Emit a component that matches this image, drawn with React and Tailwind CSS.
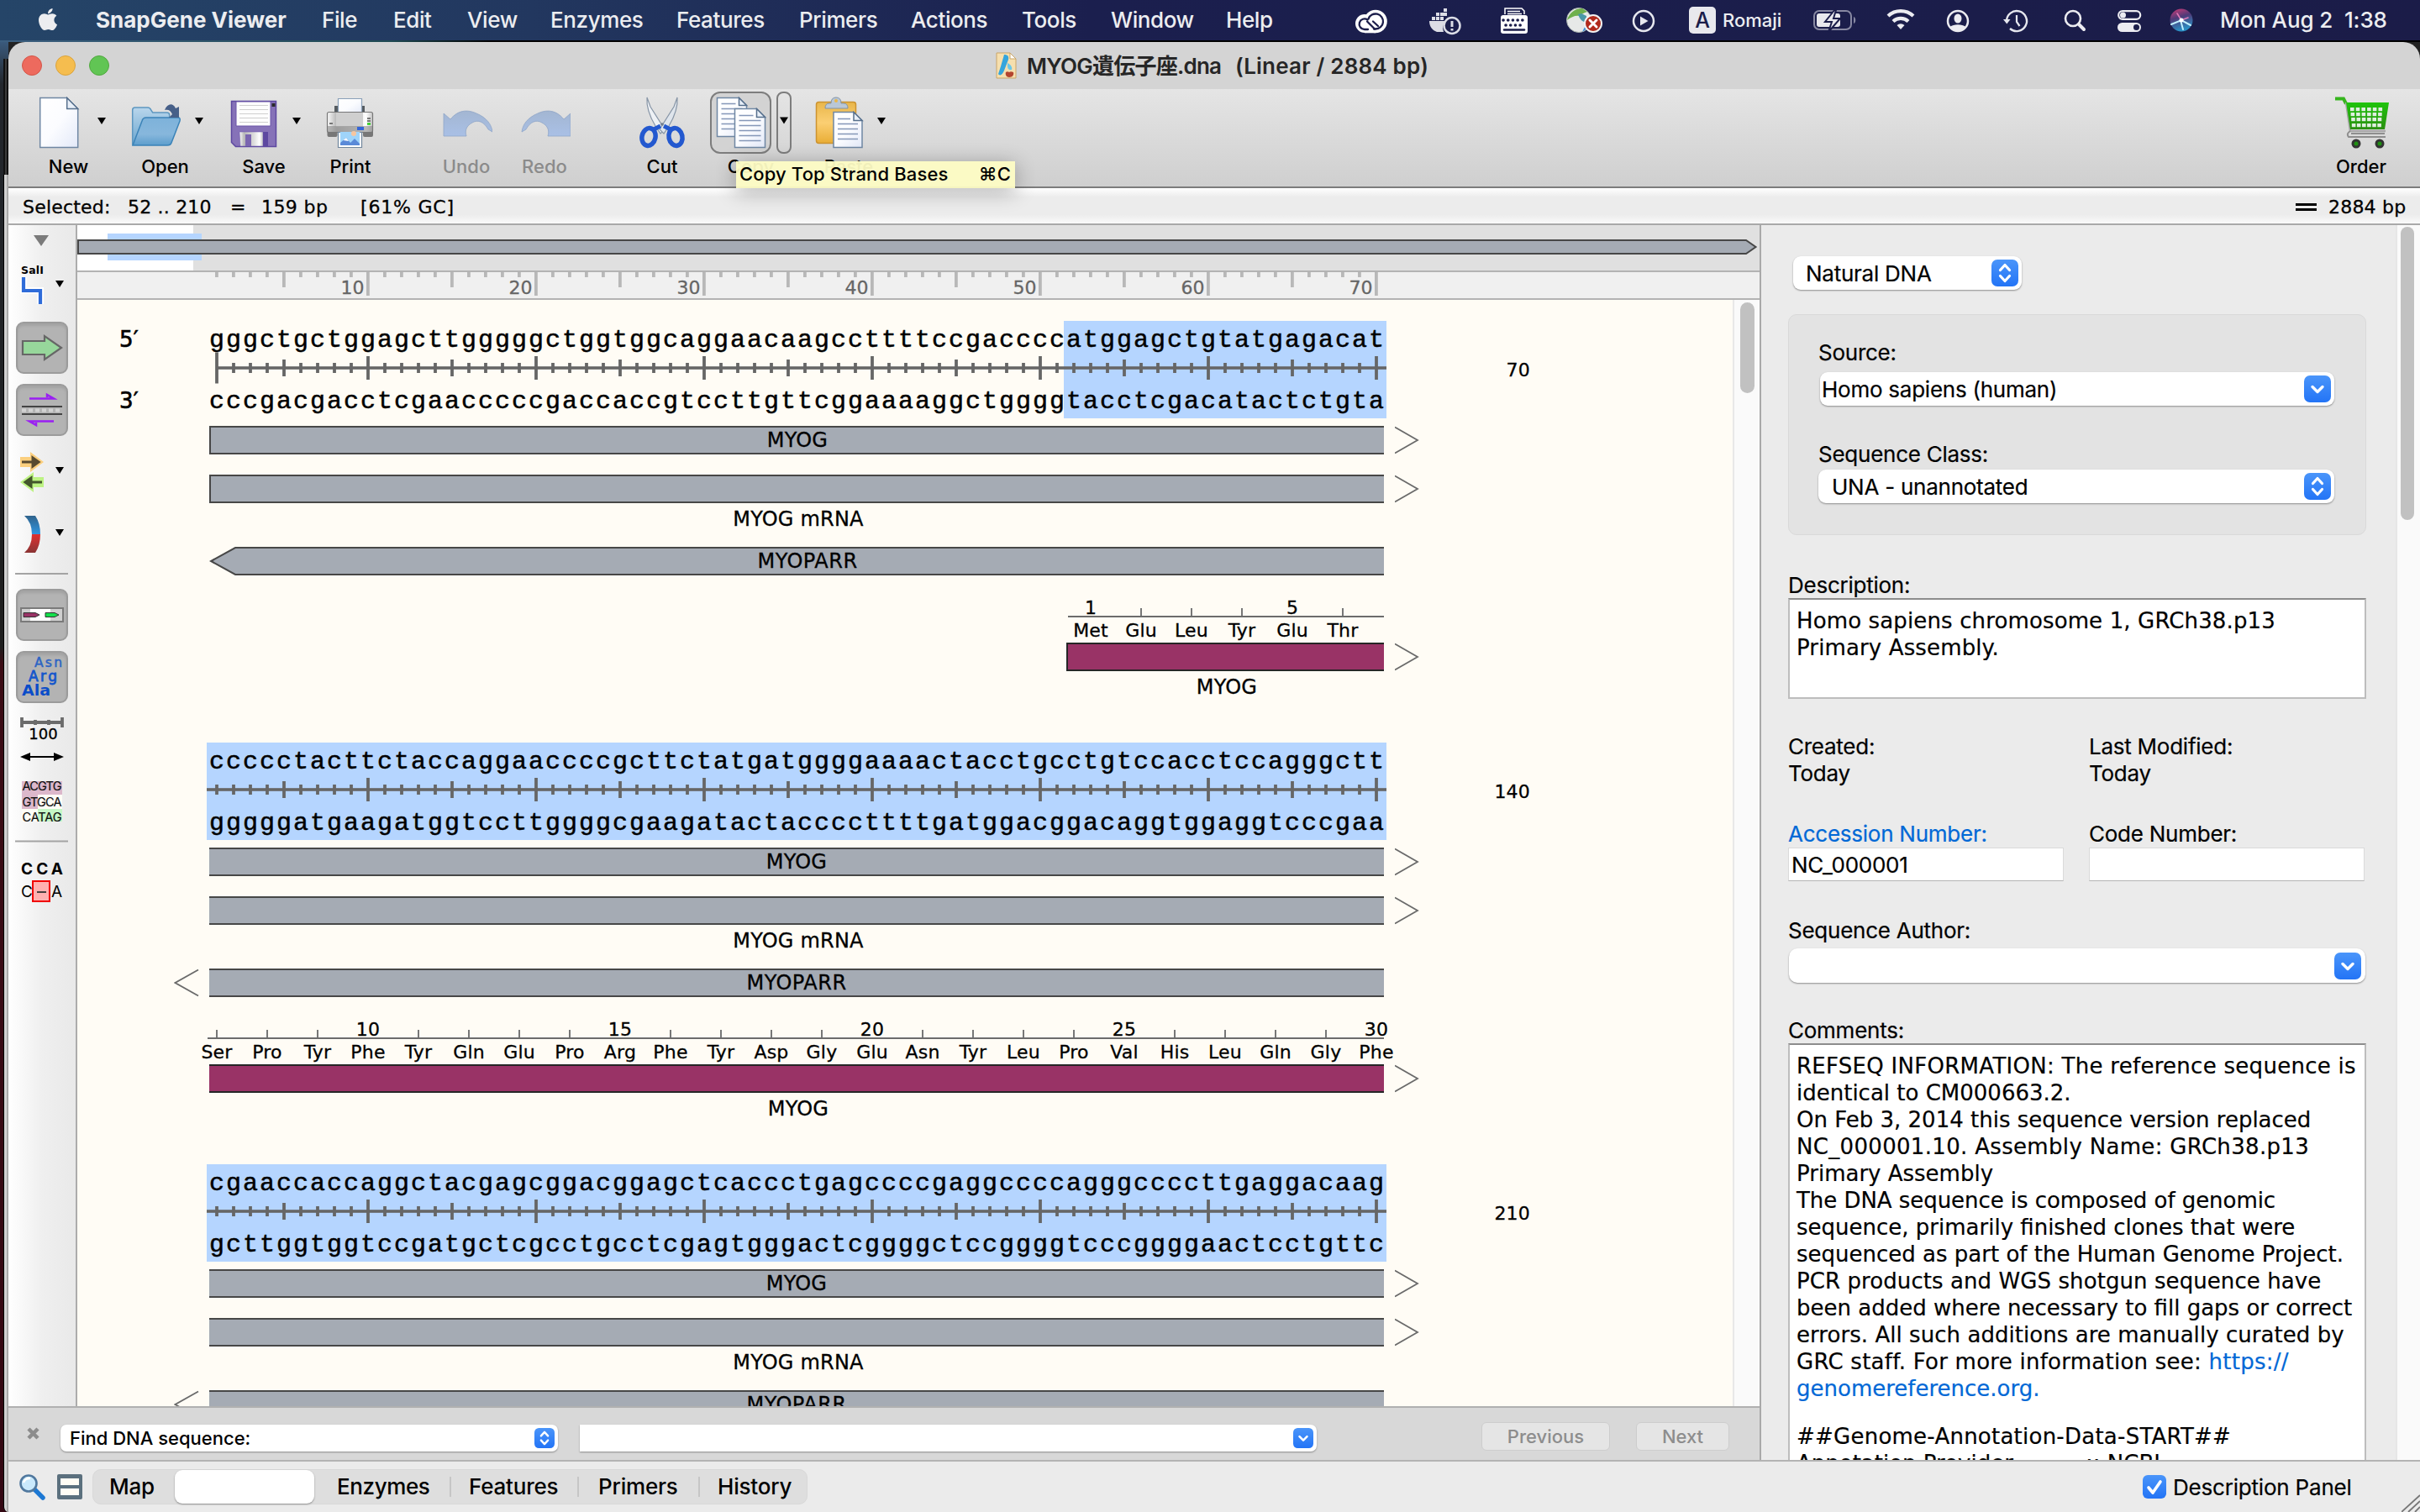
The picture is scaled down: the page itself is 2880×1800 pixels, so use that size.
import React from "react";
import { FaApple } from "react-icons/fa";

/* ---------- geometry of the sequence view ---------- */
const BASES = Array.from({ length: 70 }, (_, i) => i + 1);
const baseX = (n) => 12 + (n - 1) * 20;

const blocks = [
  {
    end: 70,
    top: "gggctgctggagcttgggggctggtggcaggaacaagccttttccgaccccatggagctgtatgagacat",
    bottom: "cccgacgacctcgaacccccgaccaccgtccttgttcggaaaaggctggggtacctcgacatactctgta",
    first: true,
  },
  {
    end: 140,
    top: "ccccctacttctaccaggaaccccgcttctatgatggggaaaactacctgcctgtccacctccagggctt",
    bottom: "gggggatgaagatggtccttggggcgaagatactaccccttttgatggacggacaggtggaggtcccgaa",
  },
  {
    end: 210,
    top: "cgaaccaccaggctacgagcggacggagctcaccctgagccccgaggccccagggccccttgaggacaag",
    bottom: "gcttggtggtccgatgctcgcctgcctcgagtgggactcggggctccggggtcccggggaactcctgttc",
    last: true,
  },
];

const aaFirst = [["Met", "1"], ["Glu"], ["Leu"], ["Tyr"], ["Glu", "5"], ["Thr"]];
const aaSecond = [
  ["Ser"], ["Pro"], ["Tyr"], ["Phe", "10"], ["Tyr"], ["Gln"], ["Glu"], ["Pro"], ["Arg", "15"], ["Phe"], ["Tyr"], ["Asp"],
  ["Gly"], ["Glu", "20"], ["Asn"], ["Tyr"], ["Leu"], ["Pro"], ["Val", "25"], ["His"], ["Leu"], ["Gln"], ["Gly"], ["Phe", "30"],
];

/* ---------- menu bar ---------- */
function MenuBar() {
  return (
    <header className="flex h-[50px] shrink-0 flex-col bg-black">
      <div className="flex h-12 items-center bg-[linear-gradient(90deg,#254568_0%,#22375f_22%,#1b1f4e_45%,#1b1c48_100%)] pl-[42px] font-[Inter] text-[26px] font-medium leading-[48px] tracking-[-0.4px] text-[#ecedf0]">
        <FaApple className="mb-[3px] mr-[42px] size-[30px] text-[#ecedf0]" />
        <span className="w-[269px] font-bold tracking-normal">SnapGene Viewer</span>
        <span className="w-[85px]">File</span>
        <span className="w-[88px]">Edit</span>
        <span className="w-[99px]">View</span>
        <span className="w-[150px]">Enzymes</span>
        <span className="w-[146px]">Features</span>
        <span className="w-[133px]">Primers</span>
        <span className="w-[132px]">Actions</span>
        <span className="w-[106px]">Tools</span>
        <span className="w-[137px]">Window</span>
        <span className="w-[141px]">Help</span>
        <svg className="h-12 w-[450px] shrink-0" viewBox="1600 0 450 48" fill="none">
          {/* creative cloud */}
          <circle cx="1624" cy="28" r="11" fill="#fff" />
          <circle cx="1637" cy="25.500" r="13.800" fill="#fff" />
          <rect x="1624" y="30" width="13" height="9.300" fill="#fff" />
          <path d="M1627.500 23.500a6.300 6.300 0 1 0-3.500 11.500h4" stroke="#1b1d4a" strokeWidth="2.300" strokeLinecap="round" />
          <path d="M1635 34.500h2a9 9 0 1 0-8.500-12" stroke="#1b1d4a" strokeWidth="2.300" strokeLinecap="round" />
          <path d="M1627 25.500l9 9M1634 25.500l6 5.500" stroke="#1b1d4a" strokeWidth="2.300" strokeLinecap="round" />
          {/* docker */}
          <g fill="#dcdde6">
            <path d="M1701 25h20a12 12 0 0 0-3 13h-8c-6-2-9-7-9-13z" />
            <path d="M1704 20h4v4h-4zM1709 20h4v4h-4zM1709 15h4v4h-4zM1714 20h4v4h-4zM1714 15h4v4h-4zM1718 15h4v4h-4zM1718 10h4v4h-4z" />
          </g>
          <circle cx="1728" cy="30.500" r="9.500" stroke="#dcdde6" strokeWidth="2.500" />
          <path d="M1728 25v7M1728 34v2.500" stroke="#dcdde6" strokeWidth="3" />
          {/* typewriter */}
          <path d="M1791 17V10h20l3 3v4" stroke="#fff" strokeWidth="1.500" />
          <path d="M1794 13.500h15M1794 16.500h17" stroke="#fff" strokeWidth="1.300" />
          <rect x="1786" y="18" width="32" height="22" rx="3" fill="#fff" />
          <path d="M1789 24h26M1792 30h22" stroke="#1b1d4a" strokeWidth="3.600" strokeLinecap="round" strokeDasharray="0.100 5.600" />
          <path d="M1790 35.500h24" stroke="#1b1d4a" strokeWidth="2.500" strokeLinecap="round" />
          {/* globe */}
          <circle cx="1879" cy="24" r="14.500" fill="#e7e9e8" stroke="#a9b3ad" />
          <path d="M1865 24c2-8 9-14 18-14l6 4c-4 1-7 3-9 5-5-1-10 1-15 5z" fill="#6fb04d" />
          <path d="M1878 17c2 6 5 9 10 10v-8l-6-3z" fill="#4b98a8" />
          <path d="M1883 38l3-6 3 2z" fill="#3f8fd8" />
          <circle cx="1896" cy="28" r="10" fill="#b12a1b" stroke="#f1f1f1" strokeWidth="2" />
          <path d="M1892 24l8 8M1900 24l-8 8" stroke="#fff" strokeWidth="3" strokeLinecap="round" />
          {/* play */}
          <circle cx="1956" cy="25" r="12" stroke="#e6e7ee" strokeWidth="2.500" />
          <path d="M1952 19.500l9.500 5.500-9.500 5.500z" fill="#e6e7ee" />
          {/* input source */}
          <rect x="2010" y="8" width="32" height="32" rx="5" fill="#e8e8ed" />
          <text x="2026" y="33" textAnchor="middle" fontFamily="Inter" fontSize="25" fill="#1b1d4a" letterSpacing="0">A</text>
        </svg>
        <span className="w-[108px] text-[22px] tracking-normal">Romaji</span>
        <svg className="h-12 w-[482px] shrink-0" viewBox="2158 0 482 48" fill="none">
          {/* battery */}
          <rect x="2159" y="13" width="44" height="22" rx="6" stroke="#8788a2" strokeWidth="2" />
          <path d="M2206 20c3 1 3 7 0 8z" fill="#8788a2" />
          <rect x="2162" y="16" width="28" height="16" rx="3" fill="#e8e8ed" />
          <path d="M2184 11l-12 15h8l-4 12 14-16h-8l3-10z" fill="#e8e8ed" stroke="#1b1d4a" strokeWidth="2" />
          {/* wifi */}
          <path d="M2247 19a22 22 0 0 1 30 0M2253 25.500a13 13 0 0 1 18 0" stroke="#ececf1" strokeWidth="4.200" />
          <path d="M2262 35l-4.500-5a7 7 0 0 1 9 0z" fill="#ececf1" />
          {/* user */}
          <circle cx="2330" cy="25" r="12" stroke="#ececf1" strokeWidth="2.500" />
          <ellipse cx="2330" cy="22" rx="4.500" ry="5.500" fill="#ececf1" />
          <path d="M2320.500 32a13 9 0 0 1 19 0a12 12 0 0 1-19 0z" fill="#ececf1" />
          {/* time machine */}
          <path d="M2388 25a12 12 0 1 1 4 9" stroke="#e6e7ee" strokeWidth="2.400" />
          <path d="M2384 23h8.500l-4.200 5.500z" fill="#e6e7ee" />
          <path d="M2400 18v8l3.500 5" stroke="#e6e7ee" strokeWidth="2.200" />
          {/* search */}
          <circle cx="2467" cy="22" r="9" stroke="#ececf1" strokeWidth="2.600" />
          <path d="M2474 29l6 6" stroke="#ececf1" strokeWidth="4" strokeLinecap="round" />
          {/* control centre */}
          <rect x="2521.200" y="13.200" width="26" height="9.600" rx="4.800" stroke="#ececf1" strokeWidth="2.200" />
          <circle cx="2526.500" cy="18" r="3.500" fill="#ececf1" />
          <rect x="2520" y="27" width="28" height="11" rx="5.500" fill="#ececf1" />
          <circle cx="2542.500" cy="32.500" r="3.500" fill="#1b1d4a" />
          {/* siri */}
          <defs>
            <linearGradient id="siri" x1="0" y1="0" x2="0.300" y2="1">
              <stop offset="0" stopColor="#d23c77" />
              <stop offset="0.450" stopColor="#503a78" />
              <stop offset="1" stopColor="#2a8fc4" />
            </linearGradient>
          </defs>
          <circle cx="2596" cy="24" r="13.500" fill="url(#siri)" />
          <path d="M2584 29l12-5 11 6M2595 24l3 11" stroke="#bff0ff" strokeWidth="2" strokeLinecap="round" />
          <path d="M2591 16l5 8 8-3" stroke="#e07ab8" strokeWidth="1.600" strokeLinecap="round" />
          <circle cx="2596" cy="24" r="2.500" fill="#fff" />
        </svg>
        <span className="ml-[2px] whitespace-pre tracking-[-0.100px]">Mon Aug 2  1:38</span>
      </div>
      <div className="h-[2px] w-[582px] bg-[linear-gradient(90deg,#3c5f80,#1f4a52_80%,#000)]" />
    </header>
  );
}

/* ---------- toolbar ---------- */
function Caret({ className }) {
  return (
    <svg className={className} viewBox="0 0 10 78">
      <path d="M0 34h10l-5 8z" fill="#000" />
    </svg>
  );
}

const Label = ({ children, dim }) => (
  <span
    className={
      dim
        ? "text-center font-[Inter] text-[22px] font-medium leading-[28px] text-[#8b8b8b]"
        : "text-center font-[Inter] text-[22px] font-medium leading-[28px] text-black"
    }
  >
    {children}
  </span>
);

function Defs() {
  return (
    <svg className="absolute size-0">
      <defs>
        <linearGradient id="paper" x1="0" y1="0" x2="1" y2="1">
          <stop offset="0" stopColor="#fff" />
          <stop offset="0.500" stopColor="#fbfcff" />
          <stop offset="1" stopColor="#e3e9f8" />
        </linearGradient>
        <linearGradient id="folderBack" x1="0" y1="0" x2="0" y2="1">
          <stop offset="0" stopColor="#b9d6ec" />
          <stop offset="1" stopColor="#6aa6cf" />
        </linearGradient>
        <linearGradient id="folderFront" x1="0" y1="0" x2="0" y2="1">
          <stop offset="0" stopColor="#7db2da" />
          <stop offset="0.600" stopColor="#87b7dc" />
          <stop offset="1" stopColor="#5c9dcc" />
        </linearGradient>
        <linearGradient id="metal" x1="0" y1="0" x2="1" y2="0">
          <stop offset="0" stopColor="#fafafa" />
          <stop offset="0.200" stopColor="#b8b8b8" />
          <stop offset="0.600" stopColor="#dcdcdc" />
          <stop offset="0.850" stopColor="#fff" />
          <stop offset="1" stopColor="#c4c4c4" />
        </linearGradient>
        <linearGradient id="undo" x1="0" y1="0" x2="0" y2="1">
          <stop offset="0" stopColor="#a3b6d2" />
          <stop offset="1" stopColor="#a9c0e6" />
        </linearGradient>
        <linearGradient id="clip" x1="0" y1="0" x2="0" y2="1">
          <stop offset="0" stopColor="#e9b64a" />
          <stop offset="0.500" stopColor="#fbcf73" />
          <stop offset="1" stopColor="#e9ad35" />
        </linearGradient>
        <linearGradient id="cart" x1="0" y1="0" x2="0" y2="1">
          <stop offset="0" stopColor="#1fc40c" />
          <stop offset="1" stopColor="#2a8f10" />
        </linearGradient>
        <linearGradient id="blueKnob" x1="0" y1="0" x2="0" y2="1">
          <stop offset="0" stopColor="#4a95fa" />
          <stop offset="1" stopColor="#2374f6" />
        </linearGradient>
      </defs>
    </svg>
  );
}

function Page({ x, y, w, h, fold, lines }) {
  return (
    <g>
      <path d={`M${x} ${y}h${w - fold}l${fold} ${fold}v${h - fold}h${-w}z`} fill="url(#paper)" stroke="#6f87a3" strokeWidth="1.500" />
      <path d={`M${x + w - fold} ${y}v${fold}h${fold}z`} fill="#e8eff8" stroke="#566f8c" strokeWidth="1.500" />
      {lines.map((l) => (
        <path key={l} d={`M${x + 5} ${y + l}h${l < fold + 3 ? w - fold - 9 : w - 10}`} stroke="#8597b8" strokeWidth="1.500" />
      ))}
    </g>
  );
}

function Toolbar() {
  return (
    <div className="flex h-[118px] shrink-0 border-b-2 border-[#7c7c7c] bg-linear-to-b from-[#e5e5e5] to-[#cfcfcf] pl-[27px] pr-[34px]">
      <div className="flex w-[89px] flex-col">
        <div className="flex h-[78px] justify-end">
          <svg className="h-[78px] w-[50px]" viewBox="45 106 50 78">
            <Page x={47.700} y={116.500} w={45} h={59} fold={13} lines={[]} />
          </svg>
          <Caret className="ml-[21px] h-[78px] w-[10px]" />
        </div>
        <Label>New</Label>
      </div>
      <div className="ml-[25px] flex w-[91px] flex-col">
        <div className="flex h-[78px] justify-end">
          <svg className="h-[78px] w-[62px]" viewBox="155 106 62 78">
            <path d="M157.700 172v-41q0-3 3-3h15q3 0 4 3l2 3h17q3 0 3 3v34z" fill="url(#folderBack)" stroke="#5d97c0" strokeWidth="1.500" />
            <path d="M158 173l11-29q1-4 5-4h38q3 0 2 4l-10 26q-1 3-5 3z" fill="url(#folderFront)" stroke="#3b83b8" strokeWidth="1.500" />
            <path d="M196 131c3-8 10-9 13-2l4-2v13h-12l4-4c-2-5-5-6-9-5z" fill="#465f88" />
          </svg>
          <Caret className="ml-[15px] h-[78px] w-[10px]" />
        </div>
        <Label>Open</Label>
      </div>
      <div className="ml-[28px] flex w-[88px] flex-col">
        <div className="flex h-[78px] justify-end">
          <svg className="h-[78px] w-[58px]" viewBox="273 106 58 78">
            <path d="M275.500 120.500h53v54h-48l-5-5z" fill="#8672b8" stroke="#5d48a0" strokeWidth="1.500" />
            <path d="M281 121h41v29h-41z" fill="#fdfdfd" stroke="#6a55a8" strokeWidth="1" />
            <path d="M285 125.500h34M285 130.500h34M285 135.500h34M285 140.500h34M285 145.500h34" stroke="#cfcfcf" strokeWidth="1.200" />
            <rect x="323.500" y="123" width="4" height="4" fill="#2b2b2b" />
            <path d="M285 157h28v17h-27z" fill="url(#metal)" stroke="#6a55a8" strokeWidth="0.500" />
            <rect x="313" y="157" width="6" height="17" fill="#5d48a0" />
            <rect x="292" y="160" width="7" height="14" fill="#7a65b0" />
          </svg>
          <Caret className="ml-[17px] h-[78px] w-[10px]" />
        </div>
        <Label>Save</Label>
      </div>
      <div className="ml-[29px] flex w-[60px] flex-col">
        <svg className="h-[78px] w-[60px]" viewBox="388 106 60 78">
          <path d="M399 134v-8h4v8zM431 134v-8h4v8z" fill="#555b60" />
          <path d="M403.500 117.500h28v18h-28z" fill="url(#paper)" stroke="#8aa0b8" strokeWidth="1.200" />
          <rect x="390.500" y="155" width="12" height="8" rx="2" fill="#777" />
          <rect x="433" y="155" width="12" height="8" rx="2" fill="#777" />
          <rect x="390.500" y="133.500" width="54" height="24" rx="2" fill="url(#metal)" stroke="#777" strokeWidth="1.200" />
          <rect x="401" y="134" width="32" height="17" fill="#cfcfcf" />
          <path d="M391 150h53v7h-53z" fill="#8a8a8a" fillOpacity="0.600" />
          <path d="M393 147h4" stroke="#777" strokeWidth="2" />
          <path d="M438 141h4M438 144h4" stroke="#777" strokeWidth="1.800" />
          <path d="M438 147.500h4" stroke="#2ccc1d" strokeWidth="2.500" />
          <rect x="426" y="151" width="8" height="4" fill="#3465d8" />
          <path d="M403.500 157.500h28v18h-28z" fill="#fff" stroke="#70869c" strokeWidth="1.200" />
          <path d="M406 157h23v16h-23z" fill="#9fd4fa" />
          <circle cx="422" cy="159" r="3" fill="#f7c6a0" />
          <path d="M406 173v-3l7-6 5 6 5-5 6 6v2z" fill="#5a8ad8" />
          <path d="M409.500 167l3.500-3 3 4z" fill="#fff" />
        </svg>
        <Label>Print</Label>
      </div>
      <div className="ml-[77px] flex w-[62px] flex-col">
        <svg className="h-[78px] w-[62px]" viewBox="525 106 62 78">
          <path d="M529 135l8 7c9-11 20-12 31-7 12 5 18 13 19 22l-5-3c-5-9-12-12-19-8-7 4-9 9-7 16h-27z" fill="url(#undo)" stroke="#8fa6c8" strokeWidth="0.800" />
        </svg>
        <Label dim>Undo</Label>
      </div>
      <div className="ml-[31px] flex w-[62px] flex-col">
        <svg className="h-[78px] w-[62px]" viewBox="618 106 62 78">
          <path d="M680 135l-8 7c-9-11-20-12-31-7-12 5-18 13-19 22l5-3c5-9 12-12 19-8 7 4 9 9 7 16h27z" fill="url(#undo)" stroke="#8fa6c8" strokeWidth="0.800" />
        </svg>
        <Label dim>Redo</Label>
      </div>
      <div className="ml-[79px] flex w-[60px] flex-col">
        <svg className="h-[78px] w-[60px]" viewBox="758 106 60 78">
          <path d="M770 116l4 11 17 27-5 5-6-9c-6-10-11-22-10-34z" fill="#eef1f5" stroke="#8795a6" strokeWidth="1.200" />
          <path d="M806 116l-4 11-17 27 5 5 6-9c6-10 11-22 10-34z" fill="#dfe5ec" stroke="#8795a6" strokeWidth="1.200" />
          <ellipse cx="772" cy="163" rx="8" ry="10.500" fill="none" stroke="#2358cf" strokeWidth="5.500" transform="rotate(12 772 163)" />
          <ellipse cx="804" cy="163" rx="8" ry="10.500" fill="none" stroke="#2358cf" strokeWidth="5.500" transform="rotate(-12 804 163)" />
          <path d="M778 154l8-4M798 154l-8-4" stroke="#2358cf" strokeWidth="5" />
          <circle cx="788" cy="148" r="1.800" fill="#6f7c8d" />
        </svg>
        <Label>Cut</Label>
      </div>
      <div className="ml-[27px] flex w-[97px] flex-col">
        <div className="flex h-[78px] justify-between pt-[3px]">
          <div className="h-[74px] w-[73px] rounded-[12px] border-[2.500px] border-[#7d7d7d] bg-[#d3d3d3]">
            <svg className="ml-[5px] h-[68px] w-[60px]" viewBox="853 111 60 68">
              <Page x={854.500} y={116.500} w={35} h={46} fold={9} lines={[7, 13, 19, 25, 31, 37]} />
              <Page x={875.500} y={129.500} w={36} h={46} fold={10} lines={[8, 14, 20, 26, 32, 38]} />
            </svg>
          </div>
          <div className="flex h-[74px] w-[18px] justify-center rounded-[8px] border-[2.500px] border-[#7d7d7d]">
            <svg className="h-[70px] w-[10px]" viewBox="0 0 10 70">
              <path d="M0 28.500h10l-5 8z" fill="#000" />
            </svg>
          </div>
        </div>
        <Label>Copy</Label>
      </div>
      <div className="ml-[24px] flex w-[88px] flex-col">
        <div className="flex h-[78px] justify-end">
          <svg className="h-[78px] w-[60px]" viewBox="969 106 60 78">
            <rect x="971.500" y="121.500" width="47" height="49" rx="3" fill="url(#clip)" stroke="#cc9330" strokeWidth="1.500" />
            <path d="M982 129q0-6 5-6h2q0-7 6-7t6 7h3q5 0 5 6z" fill="#b9c7d6" stroke="#8293a7" strokeWidth="1" />
            <circle cx="995" cy="120" r="2" fill="#e9b64a" />
            <Page x={992} y={133.500} w={34} h={42} fold={10} lines={[8, 14, 20, 26, 32]} />
          </svg>
          <Caret className="ml-[15px] h-[78px] w-[10px]" />
        </div>
        <Label>Paste</Label>
      </div>
      <div className="ml-auto flex w-[72px] flex-col">
        <svg className="h-[78px] w-[72px]" viewBox="2775 106 72 78">
          <path d="M2780 117.500h10l3 6" stroke="#37b51e" strokeWidth="4" fill="none" />
          <path d="M2793 122l5 34h42" stroke="#a7a7a7" strokeWidth="2.500" fill="none" />
          <path d="M2793 122h51l-5 32h-41z" fill="url(#cart)" />
          <g fill="#e0efe0">
            {[128, 134, 140, 147].map((y, r) =>
              [0, 1, 2, 3, 4, 5].map((c) => <rect key={`${y}-${c}`} x={2798 + r * 0.6 + c * (6.700 - r * 0.2)} y={y} width="4.600" height="4.200" />)
            )}
          </g>
          <path d="M2798 156q-5 3-2 7h44M2799 159h40" stroke="#8e8e8e" strokeWidth="2" fill="none" />
          <circle cx="2805" cy="171" r="4" fill="#1f8f12" stroke="#333" strokeWidth="3" />
          <circle cx="2833" cy="171" r="4" fill="#1f8f12" stroke="#333" strokeWidth="3" />
        </svg>
        <Label>Order</Label>
      </div>
    </div>
  );
}

/* ---------- side tool strip ---------- */
const SideButton = ({ children }) => (
  <div className="ml-[9px] flex h-[62px] w-[62px] shrink-0 items-center justify-center rounded-[9px] border-2 border-[#9b9b9b] bg-[#b3b3b3] shadow-[inset_0_3px_3px_#a3a3a3]">
    {children}
  </div>
);

function SideBar() {
  return (
    <aside className="flex w-[82px] shrink-0 flex-col overflow-hidden border-r-2 border-[#acacac] bg-linear-to-r from-white via-[#efefef] to-[#e9e9e9]">
      <svg className="h-[112px] w-[80px] shrink-0" viewBox="10 268 80 112">
        <path d="M40 280h18l-9 13z" fill="#7b7b7b" />
        <text x="25" y="326" fontFamily="DejaVu Sans" fontWeight="bold" fontSize="12.500" textLength="27">SalI</text>
        <path d="M28 330v16h20v16" stroke="#fff" strokeWidth="8" fill="none" />
        <path d="M28 330v16h20v16" stroke="#2f6cd9" strokeWidth="4.200" fill="none" />
        <path d="M66 334h10l-5 8z" />
      </svg>
      <div className="h-[3px] shrink-0" />
      <SideButton>
        <svg className="h-[58px] w-[58px]" viewBox="21 385 58 58">
          <path d="M27 406h26v-6l20 14-20 14v-6H27z" fill="#97d79b" stroke="#666" strokeWidth="2.200" />
        </svg>
      </SideButton>
      <div className="h-3 shrink-0" />
      <SideButton>
        <svg className="h-[58px] w-[58px]" viewBox="21 459 58 58">
          <path d="M35 474.500h29l-8-4.500v3" fill="none" stroke="#9a1ff2" strokeWidth="2.500" />
          <path d="M26 484h48M26 493h48" stroke="#444" strokeWidth="1.800" />
          <path d="M26 488.500h48" stroke="#d2d2d2" strokeWidth="4" strokeDasharray="5 3" />
          <path d="M64 501.500H35l8 4.500v-3" fill="none" stroke="#9a1ff2" strokeWidth="2.500" />
        </svg>
      </SideButton>
      <svg className="h-[182px] w-[80px] shrink-0" viewBox="10 519 80 182">
        <path d="M24 544h12v-6l16 12-16 12v-6H24z" fill="#fbcf7e" />
        <path d="M26 550h20M39 545l7 5-7 5z" stroke="#574a30" strokeWidth="3" fill="#574a30" />
        <path d="M52 568H40v-6l-16 12 16 12v-6h12z" fill="#bdf283" />
        <path d="M50 574H30M37 569l-7 5 7 5z" stroke="#43562c" strokeWidth="3" fill="#43562c" />
        <path d="M66 556h10l-5 8zM66 630h10l-5 8z" />
        <defs>
          <linearGradient id="arcB" x1="0" y1="0" x2="0" y2="1">
            <stop offset="0" stopColor="#30638c" />
            <stop offset="1" stopColor="#2f95e0" />
          </linearGradient>
          <linearGradient id="arcR" x1="0" y1="0" x2="0" y2="1">
            <stop offset="0" stopColor="#e03030" />
            <stop offset="1" stopColor="#8a3434" />
          </linearGradient>
        </defs>
        <path d="M29 614h13q6 9 6 22H38q0-14-9-22z" fill="url(#arcB)" />
        <path d="M29 658h13q6-9 6-22H38q0 14-9 22z" fill="url(#arcR)" />
        <path d="M18 683h63" stroke="#a3a3a3" strokeWidth="2" />
      </svg>
      <SideButton>
        <svg className="h-[58px] w-[58px]" viewBox="21 703 58 58">
          <rect x="25" y="724" width="50" height="16" fill="#cfcfcf" stroke="#7a7a7a" strokeWidth="2" />
          <rect x="36" y="725" width="24" height="14" fill="#fff" />
          <path d="M28 729.500h14l5 2.500-5 2.500H28z" fill="#993366" stroke="#333" />
          <path d="M54 729.500h11l5 2.500-5 2.500H54z" fill="#13e04b" stroke="#333" />
        </svg>
      </SideButton>
      <div className="h-3 shrink-0" />
      <SideButton>
        <svg className="h-[58px] w-[58px]" viewBox="21 777 58 58">
          <g fontFamily="DejaVu Sans">
            <text x="41" y="794" fontSize="15.500" stroke="#2c64c4" strokeWidth="0.500" fill="#2c64c4" textLength="33">Asn</text>
            <text x="34" y="810.500" fontSize="17" stroke="#1557cc" strokeWidth="0.800" fill="#1557cc" textLength="34">Arg</text>
            <text x="26" y="828" fontWeight="bold" fontSize="18" fill="#0a4cc9" textLength="34" lengthAdjust="spacingAndGlyphs">Ala</text>
          </g>
        </svg>
      </SideButton>
      <svg className="h-[250px] w-[80px] shrink-0" viewBox="10 837 80 250">
        <path d="M26 860h48M26 854v12M74 854v12M42 857v6M58 857v6" stroke="#6b6b6b" strokeWidth="3.800" />
        <text x="51.500" y="880" fontFamily="DejaVu Sans" fontSize="18" textAnchor="middle" stroke="#000" strokeWidth="0.300">100</text>
        <path d="M32 901h36" stroke="#000" strokeWidth="2" />
        <path d="M24 901l12-5v10zM76 901l-12-5v10z" />
        <path d="M26 930h48v16H45v17H26z" fill="#dcb8cb" />
        <path d="M45 946h29v17H45zM26 963h19v15H26z" fill="#fffdf6" />
        <path d="M45 963h29v15H45z" fill="#c6f7c6" />
        <g fontFamily="Inter" fontSize="14.500" fill="#111" stroke="#111" strokeWidth="0.200">
          <text x="26.500" y="941" textLength="47">ACGTG</text>
          <text x="26.500" y="959.500" textLength="47">GTGCA</text>
          <text x="26.500" y="977.500" textLength="47">CATAG</text>
        </g>
        <path d="M18 1001.500h63" stroke="#a3a3a3" strokeWidth="2" />
        <g fontFamily="Inter" fontSize="19">
          <text x="25" y="1041" fontWeight="bold" textLength="50">CCA</text>
          <text x="25" y="1068">C</text>
          <text x="61" y="1068">A</text>
        </g>
        <rect x="39" y="1049" width="20" height="24" fill="#ffb0b0" stroke="#f00000" strokeWidth="2" />
        <path d="M44 1062h11" stroke="#333" strokeWidth="1.800" />
      </svg>
    </aside>
  );
}

/* ---------- sequence map ---------- */
function Overview() {
  return (
    <svg className="h-[54px] w-[2002px] shrink-0" viewBox="92 268 2002 54">
      <rect x="92" y="268" width="2003" height="54" fill="#e0e0e0" />
      <rect x="92" y="268" width="138" height="54" fill="#fff" />
      <rect x="128" y="278" width="112" height="32" fill="#b5d5ff" />
      <path d="M93 286h1985l11.500 8-11.500 8H93z" fill="#a5abb4" stroke="#474747" strokeWidth="2" />
    </svg>
  );
}

function Ruler() {
  return (
    <svg className="h-[35px] w-[2002px] shrink-0 border-y-2 border-[#b3b3b3] bg-[#f0f0f0]" viewBox="92 324 2002 31">
      {BASES.map((n) => (
        <rect key={n} x={244 + baseX(n)} y="323" width="3.800" height={n % 10 === 0 ? 29 : n % 5 === 0 ? 19 : 7} fill="#b8b8b8" />
      ))}
      {[10, 20, 30, 40, 50, 60, 70].map((n) => (
        <text key={n} x={241.500 + baseX(n)} y="349.500" textAnchor="end" fontFamily="DejaVu Sans" fontSize="22" fill="#666" stroke="#666" strokeWidth="0.300">
          {n}
        </text>
      ))}
    </svg>
  );
}

function Axis({ first }) {
  return (
    <svg className="block h-[27px] w-[1404px] overflow-visible" viewBox="0 46 1404 27">
      <rect x={first ? 12 : 0} y="54.200" width={first ? 1392 : 1404} height="3.600" fill="#666" />
      {BASES.map((n) => {
        const h = first && n === 1 ? 18.500 : n % 10 === 0 ? 14 : n % 5 === 0 ? 10 : 6;
        return <rect key={n} x={baseX(n) - 1.900} y={56 - h} width="3.800" height={h * 2} fill="#666" />;
      })}
    </svg>
  );
}

const ChevronR = () => (
  <svg className="ml-[13px] h-[34px] w-[30px]" viewBox="0 0 30 34">
    <path d="M0 1.500L27 17L0 32.500" fill="none" stroke="#6a6a6a" strokeWidth="1.800" />
  </svg>
);
const ChevronL = () => (
  <svg className="h-[34px] w-[30px]" viewBox="0 0 30 34">
    <path d="M29 1.500L1.500 17L29 32.500" fill="none" stroke="#6a6a6a" strokeWidth="1.800" />
  </svg>
);

function FeatureBar({ first, label }) {
  return (
    <div className="flex h-[34px] shrink-0 pl-[157px]">
      <div
        className={
          first
            ? "w-[1398px] border-y-2 border-l-2 border-[#474747] bg-[#a5abb4] text-center leading-[31px]"
            : "w-[1398px] border-y-2 border-[#474747] bg-[#a5abb4] text-center leading-[31px]"
        }
      >
        {label}
      </div>
      <ChevronR />
    </div>
  );
}

function Translation({ residues, first }) {
  return (
    <div className={first ? "ml-[1176px] mt-[29px] flex flex-col" : "ml-[136px] mt-[29px] flex flex-col"}>
      <div className="flex h-[19px] text-[22px] leading-[20px]">
        {residues.map(([, n], i) => (
          <div key={i} className="flex w-[60px] shrink-0 items-end justify-center">
            {n ? <span className="h-[19px]">{n}</span> : <span className="h-[9px] w-[2px] bg-[#777]" />}
          </div>
        ))}
      </div>
      <div className={first ? "ml-[3px] h-[2px] w-[376px] bg-[#6c6c6c]" : "ml-[19px] h-[2px] w-[1400px] bg-[#6c6c6c]"} />
      <div className="flex h-[30px] text-[22px] leading-[31px]">
        {residues.map(([name], i) => (
          <span key={i} className="w-[60px] shrink-0 text-center">
            {name}
          </span>
        ))}
      </div>
      <div className={first ? "ml-[1px] flex h-[34px]" : "ml-[21px] flex h-[34px]"}>
        <div className={first ? "w-[378px] border-y-2 border-l-2 border-[#262626] bg-[#993366]" : "w-[1398px] border-y-2 border-[#262626] bg-[#993366]"} />
        <ChevronR />
      </div>
      <div className={first ? "ml-[1px] w-[382px] text-center leading-[38px]" : "ml-[21px] w-[1402px] text-center leading-[38px]"}>MYOG</div>
    </div>
  );
}

function Block({ data }) {
  const { first, last, top, bottom, end } = data;
  return (
    <div className="flex h-[502px] shrink-0 flex-col font-[DejaVu_Sans] text-[24px] tracking-[0.2px] text-black [-webkit-text-stroke:0.3px_#000]">
      <div className="flex h-[116px] shrink-0">
        <div className="flex w-[154px] flex-col gap-[27px] pl-[50px] text-[26px] [-webkit-text-stroke:0.7px_#000]">
          {first && (
            <>
              <span className="h-[46px] leading-[45px]">5′</span>
              <span className="h-[43px] leading-[44px]">3′</span>
            </>
          )}
        </div>
        <div
          className={
            first
              ? "w-[1404px] bg-[linear-gradient(to_right,transparent_1020px,#b5d5ff_1020px)] font-[Liberation_Mono] text-[30px] tracking-[1.997px] [-webkit-text-stroke:0.5px_#000]"
              : "w-[1404px] bg-[#b5d5ff] font-[Liberation_Mono] text-[30px] tracking-[1.997px] [-webkit-text-stroke:0.5px_#000]"
          }
        >
          <div className="h-[46px] whitespace-nowrap pl-[3px] leading-[47px]">{top}</div>
          <Axis first={first} />
          <div className="h-[43px] whitespace-nowrap pl-[3px] leading-[47px]">{bottom}</div>
        </div>
        <div className="w-[171px] text-right text-[22px] leading-[117px]">{end}</div>
      </div>
      <div className="h-[9px] shrink-0" />
      <FeatureBar first={first} label="MYOG" />
      <div className="h-6 shrink-0" />
      <FeatureBar first={first} label="" />
      <div className="ml-[157px] h-[52px] w-[1402px] shrink-0 text-center leading-[38px]">MYOG mRNA</div>
      {first ? (
        <div className="grid h-[34px] shrink-0 pl-[157px]">
          <svg className="col-start-1 row-start-1 h-[34px] w-[1398px]" viewBox="249 651 1398 34">
            <path d="M1648 652H280l-29 16 29 16H1648" fill="#a5abb4" stroke="#474747" strokeWidth="2" />
          </svg>
          <span className="col-start-1 row-start-1 w-[1424px] text-center leading-[34px] tracking-[0.500px]">MYOPARR</span>
        </div>
      ) : (
        <div className="flex h-[34px] shrink-0 pl-[115px]">
          <ChevronL />
          <div className="ml-[12px] w-[1398px] border-y-2 border-[#474747] bg-[#a5abb4] text-center leading-[31px] tracking-[0.500px]">MYOPARR</div>
        </div>
      )}
      {!last && <Translation first={first} residues={first ? aaFirst : aaSecond} />}
    </div>
  );
}

/* ---------- form controls ---------- */
const Knob = ({ both, small }) => (
  <svg className={small ? "h-6 w-6 shrink-0" : "h-8 w-8 shrink-0"} viewBox="0 0 32 32">
    <rect width="32" height="32" rx="7" fill="url(#blueKnob)" />
    {both ? (
      <path d="M10.500 12.500L16 6.500l5.500 6M10.500 19.500l5.500 6 5.500-6" fill="none" stroke="#fff" strokeWidth="3.200" strokeLinecap="round" strokeLinejoin="round" />
    ) : (
      <path d="M10 13.500l6 6 6-6" fill="none" stroke="#fff" strokeWidth="3.400" strokeLinecap="round" strokeLinejoin="round" />
    )}
  </svg>
);

const L = ({ children, className = "" }) => <div className={`h-[30px] shrink-0 leading-[32px] ${className}`}>{children}</div>;

function DescriptionPanel() {
  return (
    <section className="flex w-[784px] shrink-0 bg-[#ebebeb] font-[Inter] text-[26px] tracking-[-0.25px] text-black [-webkit-text-stroke:0.2px]">
      <div className="flex w-[755px] flex-col overflow-hidden pl-8">
        <div className="ml-[6px] mt-[37px] flex h-10 w-[272px] shrink-0 items-center justify-between rounded-[9px] bg-white pl-[15px] pr-1 shadow-[0_1px_2px_#8c8c8c]">
          Natural DNA <Knob both />
        </div>
        <div className="mt-[29px] h-[263px] w-[688px] shrink-0 rounded-[10px] border border-[#d9d9d9] bg-[#e3e3e3] pl-[35px] pr-[37px] pt-[29px]">
          <L>Source:</L>
          <div className="ml-[2px] mt-[9px] flex h-10 items-center justify-between rounded-[9px] bg-white pl-[2px] pr-1 shadow-[0_1px_2px_#8c8c8c]">
            Homo sapiens (human) <Knob />
          </div>
          <L className="mt-[42px]">Sequence Class:</L>
          <div className="mt-1 flex h-10 items-center justify-between rounded-[9px] bg-white pl-4 pr-1 shadow-[0_1px_2px_#8c8c8c]">
            UNA - unannotated <Knob both />
          </div>
        </div>
        <L className="mt-11">Description:</L>
        <div className="mt-px h-[120px] w-[688px] shrink-0 border-2 border-[#bdbdbd] border-t-[#8c8c8c] bg-white pl-[8px] pt-[9px] font-[DejaVu_Sans] leading-[32px] tracking-[0.13px]">
          Homo sapiens chromosome 1, GRCh38.p13
          <br />
          Primary Assembly.
        </div>
        <div className="mt-[41px] flex shrink-0 leading-[32px]">
          <div className="w-[358px]">
            Created:
            <br />
            Today
          </div>
          <div>
            Last Modified:
            <br />
            Today
          </div>
        </div>
        <div className="mt-10 flex shrink-0 gap-[30px]">
          <div className="w-[328px]">
            <L className="text-[#0068d6]">Accession Number:</L>
            <div className="mt-[2px] h-10 border border-[#dadada] border-b-[#b5b5b5] bg-white pl-[3px] leading-[40px]">NC_000001</div>
          </div>
          <div className="w-[328px]">
            <L>Code Number:</L>
            <div className="mt-[2px] h-10 border border-[#dadada] border-b-[#b5b5b5] bg-white" />
          </div>
        </div>
        <L className="mt-[43px]">Sequence Author:</L>
        <div className="ml-px mt-[7px] flex h-[41px] w-[686px] shrink-0 items-center justify-end rounded-[10px] bg-white pr-[5px] shadow-[0_1px_2px_#8c8c8c]">
          <Knob />
        </div>
        <L className="mt-[41px]">Comments:</L>
        <div className="mt-px min-h-0 w-[688px] flex-1 overflow-hidden whitespace-nowrap border-2 border-b-0 border-[#bdbdbd] border-t-[#8c8c8c] bg-white pl-[8px] pt-[9px] font-[DejaVu_Sans] leading-[32px] tracking-[0px]">
          <div className="tracking-[0.28px]">REFSEQ INFORMATION: The reference sequence is</div>
          <div>identical to CM000663.2.</div>
          <div>On Feb 3, 2014 this sequence version replaced</div>
          <div className="tracking-[0.32px]">NC_000001.10. Assembly Name: GRCh38.p13</div>
          <div>Primary Assembly</div>
          <div className="tracking-[-0.050px]">The DNA sequence is composed of genomic</div>
          <div>sequence, primarily finished clones that were</div>
          <div>sequenced as part of the Human Genome Project.</div>
          <div className="tracking-[0.080px]">PCR products and WGS shotgun sequence have</div>
          <div>been added where necessary to fill gaps or correct</div>
          <div className="tracking-[0.050px]">errors. All such additions are manually curated by</div>
          <div className="tracking-[0.250px]">
            GRC staff. For more information see: <span className="text-[#0068d6]">https://</span>
          </div>
          <div className="text-[#0068d6]">genomereference.org.</div>
          <div className="mt-[25px] tracking-[0.24px]">##Genome-Annotation-Data-START##</div>
          <div className="flex">
            <span className="w-[344px]">Annotation Provider</span>:: NCBI
          </div>
        </div>
      </div>
      <div className="flex w-[29px] flex-col border-l-2 border-[#e6e6e6] bg-[#fafafa] pl-1 pt-[2px]">
        <div className="h-[349px] w-4 rounded-full bg-[#c1c1c1]" />
      </div>
    </section>
  );
}

function FindBar() {
  return (
    <div className="flex h-[64px] shrink-0 items-start border-t-2 border-[#b0b0b0] bg-[#d8d8d8] pl-[21px] pt-[20px] font-[Inter] text-[22px] font-medium text-black">
      <svg className="mt-[2px] size-[17px]" viewBox="0 0 17 17">
        <path d="M3 3l11 11M14 3L3 14" stroke="#8c8c8c" strokeWidth="4.500" />
      </svg>
      <div className="ml-[24px] flex h-8 w-[592px] items-center justify-between rounded-[7px] bg-white pl-[11px] pr-1 shadow-[0_1px_2px_#8c8c8c]">
        Find DNA sequence: <Knob both small />
      </div>
      <div className="ml-[26px] flex h-8 w-[877px] items-center justify-end rounded-r-[7px] bg-white pr-1 shadow-[0_1px_2px_#8c8c8c]">
        <Knob small />
      </div>
      <div className="ml-[196px] mt-[-3px] h-[34px] w-[153px] rounded-[6px] border border-[#cdcdcd] bg-[#e5e5e5] text-center leading-[32px] text-[#8d8d8d]">Previous</div>
      <div className="ml-[31px] mt-[-3px] h-[34px] w-[111px] rounded-[6px] border border-[#cdcdcd] bg-[#e5e5e5] text-center leading-[32px] text-[#8d8d8d]">Next</div>
    </div>
  );
}

function BottomBar() {
  return (
    <footer className="flex h-[62px] shrink-0 items-center border-t-2 border-[#b3b3b3] bg-[#ebebeb] font-[Inter] text-[26px] font-medium tracking-[-0.2px] text-black">
      <svg className="ml-[12px] size-[32px]" viewBox="0 0 32 32">
        <path d="M19 19l10 10" stroke="#1d78d3" strokeWidth="5.500" strokeLinecap="round" />
        <circle cx="12" cy="12" r="9.500" fill="#c9e9fc" stroke="#50789e" strokeWidth="2.600" />
        <path d="M6 11a7 7 0 0 1 8-5" stroke="#fff" strokeWidth="2.500" fill="none" />
      </svg>
      <svg className="ml-[14px] h-[30px] w-[30px]" viewBox="0 0 30 30">
        <rect width="30" height="30" rx="2" fill="#5b707e" />
        <path d="M4 5h22v8H4zM4 17h22v8H4z" fill="#fffdf5" />
      </svg>
      <div className="ml-[12px] flex h-[42px] w-[851px] items-center rounded-[10px] border border-[#d8d8d8] bg-[#dedede] leading-[38px]">
        <span className="w-[97px] pl-[19px]">Map</span>
        <div className="h-10 w-[166px] rounded-[9px] bg-white shadow-[0_1px_2px_#8c8c8c]" />
        <span className="w-[161px] pl-[27px] tracking-[-0.400px]">Enzymes</span>
        <div className="h-6 w-[2px] bg-[#c6c6c6]" />
        <span className="w-[150px] pl-[21px]">Features</span>
        <div className="h-6 w-[2px] bg-[#c6c6c6]" />
        <span className="w-[142px] pl-[23px]">Primers</span>
        <div className="h-6 w-[2px] bg-[#c6c6c6]" />
        <span className="pl-[21px]">History</span>
      </div>
      <svg className="ml-auto h-7 w-7" viewBox="0 0 28 28">
        <rect width="28" height="28" rx="6" fill="url(#blueKnob)" />
        <path d="M7 15l5 6L21 8" fill="none" stroke="#fff" strokeWidth="3.600" strokeLinecap="round" strokeLinejoin="round" />
      </svg>
      <span className="ml-[8px] w-[272px] font-normal [-webkit-text-stroke:0.2px_#000]">Description Panel</span>
      <svg className="h-[24px] w-[22px] self-end" viewBox="0 0 22 24">
        <path d="M0 24L22 4M8 24L22 11M16 24L22 18" stroke="#777" strokeWidth="1.800" />
      </svg>
    </footer>
  );
}

export default function App() {
  return (
    <div className="relative flex h-[1800px] w-[2880px] flex-col overflow-hidden bg-[#222]">
      <Defs />
      <MenuBar />
      <div className="flex min-h-0 flex-1">
        {/* sliver of the desktop and of the window frame */}
        <div className="flex w-[10px] shrink-0 flex-col bg-[linear-gradient(to_bottom,#3a5a7c_0px,#23272d_50px,#1e1e1e_720px,#3b0c15_740px,#330712_1750px)]">
          <div className="ml-[4px] mt-[20px] h-[138px] border-x-2 border-[#111] bg-[#3b3b3b]" />
          <div className="ml-[4px] flex-1 rounded-bl-[14px] border-l border-r-2 border-l-black border-r-[#aaaaaa] bg-[#d2d2d2]" />
        </div>
        <div className="flex min-w-0 flex-1 flex-col">
          <div className="flex flex-1 flex-col overflow-hidden rounded-t-[20px]">
            <div className="flex h-14 shrink-0 items-center bg-[#d4d4d4] pl-[16px] font-[Inter] text-[26px] font-semibold text-[#262626]">
              <div className="flex gap-4">
                <span className="size-6 rounded-full border border-[#d35548] bg-[#ed6a5e]" />
                <span className="size-6 rounded-full border border-[#d9a33d] bg-[#f5bd4f]" />
                <span className="size-6 rounded-full border border-[#51a73f] bg-[#61c554]" />
              </div>
              <svg className="ml-[1055px] h-[32px] w-[25px]" viewBox="0 0 25 32">
                <path d="M1 1h16l7 7v23H1z" fill="#f6dfae" stroke="#c9a568" />
                <path d="M17 1v7h7z" fill="#fff" stroke="#c9a568" />
                <path d="M10 3c4 0 6 2 5 6l-5 13c-2 5-5 7-7 4l3-9z" fill="#35a5dc" />
                <path d="M14 13c4 2 6 5 5 8-3 1-5-1-5-4z" fill="#6cc8e8" />
                <path d="M12 24c1-1 3-1 4 0 1-1 3-1 5 0 1 3-1 6-5 6-3 0-5-3-4-6z" fill="#b4452f" />
              </svg>
              <span className="ml-[12px] w-[248px] whitespace-nowrap font-[Inter,Noto_Sans_CJK_JP] tracking-[-0.75px]">MYOG遺伝子座.dna</span>
              <span className="whitespace-nowrap tracking-[0.200px]">(Linear / 2884 bp)</span>
            </div>
            <Toolbar />
            <div className="flex h-[44px] shrink-0 items-center border-b-2 border-[#a9a9a9] bg-[linear-gradient(to_bottom,#ffffff,#ececec_25%,#ececec_75%,#fafafa)] pl-[17px] pt-[3px] font-[DejaVu_Sans] text-[22px] leading-[41px] tracking-[0.2px] text-black [-webkit-text-stroke:0.3px_#000]">
              <span className="w-[125px]">Selected:</span>
              <span className="w-[122px]">52 .. 210</span>
              <span className="w-[37px]">=</span>
              <span className="w-[118px] tracking-[0.4px]">159 bp</span>
              <span className="tracking-[0.8px]">[61% GC]</span>
              <span className="ml-auto flex h-[9px] w-[25px] flex-col justify-between">
                <span className="h-[3px] bg-black" />
                <span className="h-[3px] bg-black" />
              </span>
              <span className="ml-[14px] w-[109px]">2884 bp</span>
            </div>
            <div className="flex h-[1470px] shrink-0">
              <div className="flex w-[2086px] shrink-0 flex-col border-r-2 border-[#a9a9a9]">
                <div className="flex h-[1406px] shrink-0">
                  <SideBar />
                  <div className="flex w-[2002px] shrink-0 flex-col overflow-hidden">
                    <Overview />
                    <Ruler />
                    <div className="flex min-h-0 flex-1 bg-[#fffcf5]">
                      <div className="flex flex-1 flex-col overflow-hidden pt-[25px]">
                        {blocks.map((b) => (
                          <Block key={b.end} data={b} />
                        ))}
                      </div>
                      <div className="w-[32px] shrink-0 border-l-2 border-[#e8e8e8] bg-[#fafafa] pl-[7px] pt-[3px]">
                        <div className="h-[108px] w-[17px] rounded-full bg-[#c1c1c1]" />
                      </div>
                    </div>
                  </div>
                </div>
                <FindBar />
              </div>
              <DescriptionPanel />
            </div>
            <BottomBar />
          </div>
        </div>
      </div>
      {/* tooltip of the Copy button */}
      <div className="absolute left-[876px] top-[192px] flex h-[32px] w-[332px] items-center justify-between bg-[#fdfcc4]/95 pb-[2px] pl-[4px] pr-[5px] font-[Inter] text-[22px] font-medium tracking-[0.15px] text-black shadow-[0_4px_24px_rgba(0,0,0,0.3)]">
        <span>Copy Top Strand Bases</span>
        <span>⌘C</span>
      </div>
    </div>
  );
}
